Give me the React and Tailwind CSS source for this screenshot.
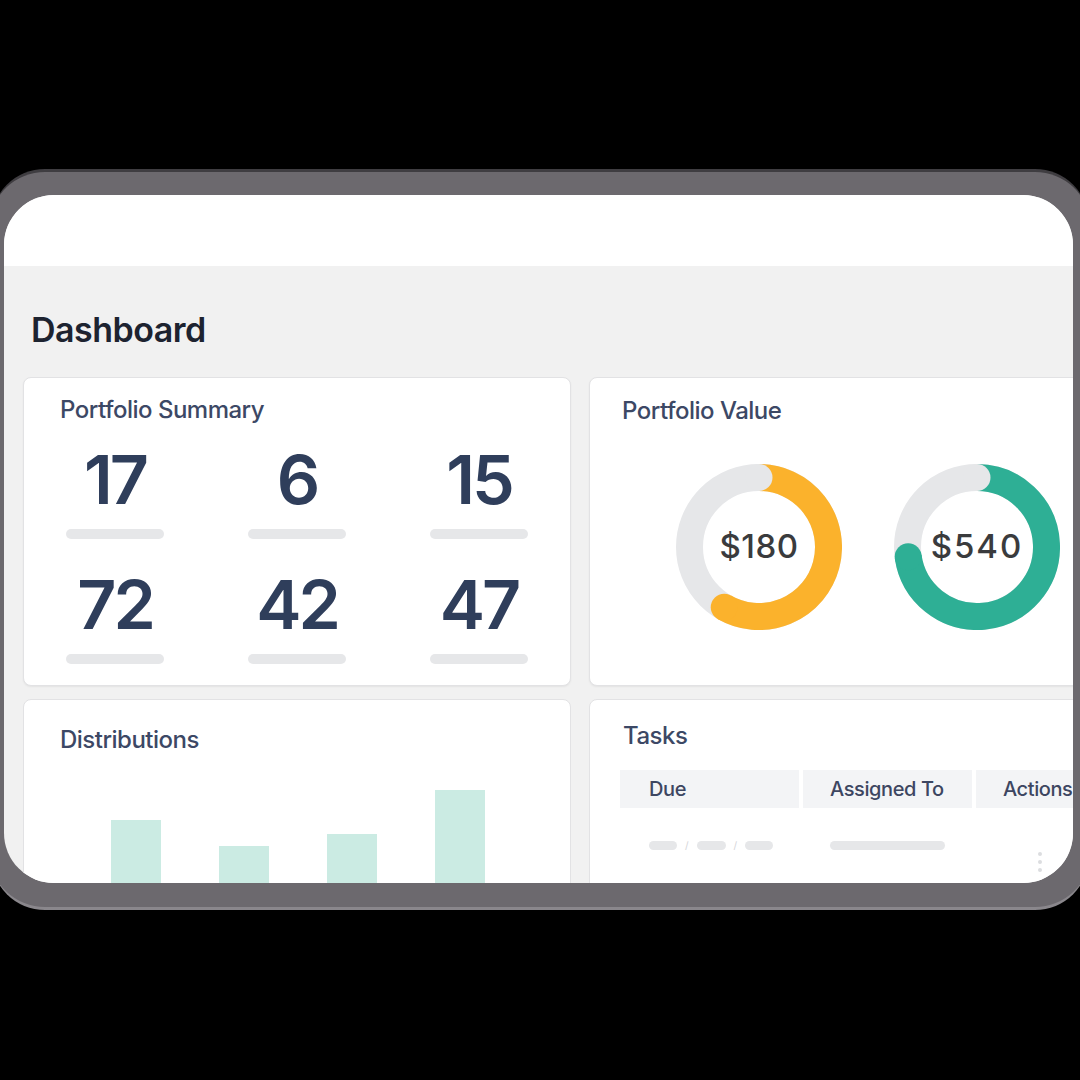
import React from "react";

const F = { fontFamily: "Inter, 'Liberation Sans', sans-serif" };

function pt(cx, cy, r, a) {
  const rad = (a * Math.PI) / 180;
  return [cx + r * Math.sin(rad), cy - r * Math.cos(rad)];
}

function Donut({ color, end, label, wide }) {
  const size = 166;
  const sw = 27;
  const r = (size - sw) / 2;
  const c = size / 2;
  const [sx, sy] = pt(c, c, r, 0);
  const [ex, ey] = pt(c, c, r, end);
  const large = end > 180 ? 1 : 0;
  return (
    <div className="relative w-[166px] h-[166px] shrink-0">
      <svg width={size} height={size} viewBox={`0 0 ${size} ${size}`}>
        <circle cx={c} cy={c} r={r} fill="none" stroke="#e6e7e9" strokeWidth={sw} />
        <path
          d={`M ${sx} ${sy} A ${r} ${r} 0 ${large} 1 ${ex} ${ey}`}
          fill="none"
          stroke={color}
          strokeWidth={sw}
          strokeLinecap="butt"
        />
        <circle cx={ex} cy={ey} r={sw / 2} fill={color} />
        <circle cx={sx} cy={sy} r={sw / 2} fill="#e6e7e9" />
      </svg>
      <div
        className={`absolute inset-0 flex items-center justify-center text-[33px] font-medium text-[#3a3b3d] ${wide ? "tracking-[2px]" : "tracking-[0.5px]"}`}
      >
        {label}
      </div>
    </div>
  );
}

function Stat({ n }) {
  return (
    <div className="flex flex-col items-center">
      <div className="text-[68px] leading-[64px] font-semibold tracking-[-3px] text-[#2f3e5b]">{n}</div>
      <div className="mt-[18px] w-[98px] h-[10px] rounded-full bg-[#e6e7e9]" />
    </div>
  );
}

const titleCls = "text-[24px] leading-[28px] font-medium tracking-[-0.5px] text-[#3c4865]";

export default function App() {
  return (
    <div className="w-[1080px] h-[1080px] bg-black overflow-hidden pt-[169px]" style={F}>
      <div className="ml-[-9px] w-[1098px] h-[741px] rounded-[54px] bg-[#6c696e] border-t-[3px] border-b-[3px] border-t-[#3f3d41] border-b-[#8a878c] pt-[23px] pl-[13px] pr-[16px] pb-[24px]">
        <div className="w-[1069px] h-[688px] rounded-[50px] overflow-hidden bg-[#f1f1f1] flex flex-col">
          <div className="h-[71px] bg-white shrink-0" />
          <div className="px-[19px]">
            <div className="mt-[44px] pl-[8px] text-[34px] leading-[40px] font-semibold tracking-[-0.5px] text-[#1d2330]">
              Dashboard
            </div>
            <div className="mt-[27px] grid grid-cols-[548px_548px] gap-x-[18px] gap-y-[13px]">
              {/* Portfolio Summary */}
              <div className="h-[309px] bg-white rounded-[8px] border border-[#e2e2e4] shadow-[0_1px_2px_rgba(0,0,0,0.06)]">
                <div className={`pl-[36px] pt-[18px] ${titleCls}`}>Portfolio Summary</div>
                <div className="mt-[23px] grid grid-cols-3 gap-y-[33px]">
                  <Stat n="17" />
                  <Stat n="6" />
                  <Stat n="15" />
                  <Stat n="72" />
                  <Stat n="42" />
                  <Stat n="47" />
                </div>
              </div>
              {/* Portfolio Value */}
              <div className="h-[309px] bg-white rounded-[8px] border border-[#e2e2e4] shadow-[0_1px_2px_rgba(0,0,0,0.06)]">
                <div className={`pl-[32px] pt-[19px] ${titleCls}`}>Portfolio Value</div>
                <div className="mt-[39px] pl-[86px] flex gap-[52px]">
                  <Donut color="#fbb22c" end={210} label="$180" />
                  <Donut color="#2eaf95" end={262} label="$540" wide />
                </div>
              </div>
              {/* Distributions */}
              <div className="h-[240px] bg-white rounded-[8px] border border-[#e2e2e4] overflow-hidden">
                <div className={`pl-[36px] pt-[26px] ${titleCls}`}>Distributions</div>
                <div className="mt-[36px] h-[110px] pl-[87px] flex items-end gap-[58px]">
                  <div className="w-[50px] h-[80px] bg-[#cbebe3]" />
                  <div className="w-[50px] h-[54px] bg-[#cbebe3]" />
                  <div className="w-[50px] h-[66px] bg-[#cbebe3]" />
                  <div className="w-[50px] h-[110px] bg-[#cbebe3]" />
                </div>
              </div>
              {/* Tasks */}
              <div className="h-[240px] bg-white rounded-[8px] border border-[#e2e2e4] overflow-hidden">
                <div className={`pl-[33px] pt-[22px] ${titleCls}`}>Tasks</div>
                <div className="mt-[20px] ml-[30px] flex gap-[4px] h-[38px] text-[20px] font-medium tracking-[-0.4px] text-[#3d4661]">
                  <div className="w-[179px] bg-[#f3f4f6] flex items-center pl-[29px]">Due</div>
                  <div className="w-[169px] bg-[#f3f4f6] flex items-center pl-[27px]">Assigned To</div>
                  <div className="w-[160px] bg-[#f3f4f6] flex items-center pl-[27px]">Actions</div>
                </div>
                <div className="relative ml-[30px] mt-[32px] flex items-center h-[10px]">
                  <div className="pl-[29px] flex items-center gap-[8px] w-[183px]">
                    <div className="w-[28px] h-[9px] rounded-full bg-[#e6e7e9]" />
                    <span className="text-[10px] leading-none text-[#d4d5d8]">/</span>
                    <div className="w-[29px] h-[9px] rounded-full bg-[#e6e7e9]" />
                    <span className="text-[10px] leading-none text-[#d4d5d8]">/</span>
                    <div className="w-[28px] h-[9px] rounded-full bg-[#e6e7e9]" />
                  </div>
                  <div className="pl-[27px]">
                    <div className="w-[115px] h-[9px] rounded-full bg-[#e6e7e9]" />
                  </div>
                  <div className="absolute left-[418px] top-[12px] flex flex-col gap-[4px]">
                    <div className="w-[4px] h-[4px] rounded-full bg-[#dcdde0]" />
                    <div className="w-[4px] h-[4px] rounded-full bg-[#dcdde0]" />
                    <div className="w-[4px] h-[4px] rounded-full bg-[#dcdde0]" />
                  </div>
                </div>
              </div>
            </div>
          </div>
        </div>
      </div>
    </div>
  );
}
